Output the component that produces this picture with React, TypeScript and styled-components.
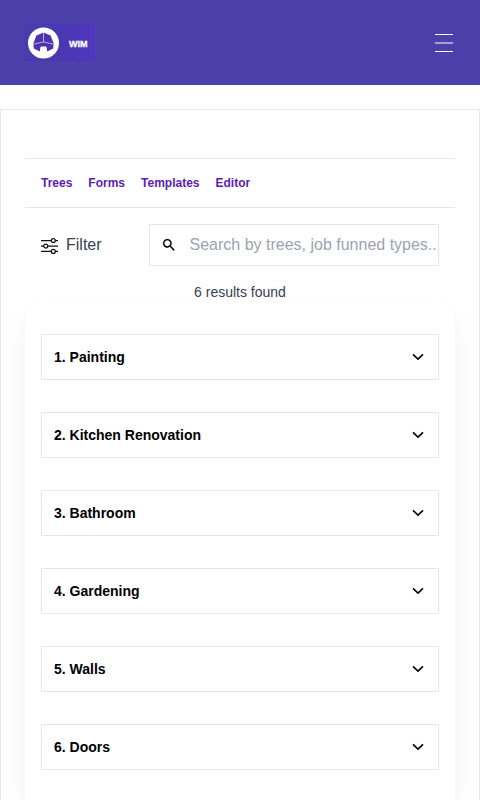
import React from "react";
import styled, { createGlobalStyle } from "styled-components";

const GlobalStyle = createGlobalStyle`
  *, *::before, *::after { box-sizing: border-box; }
  body {
    margin: 0;
    background: #fff;
    font-family: "Liberation Sans", Arial, sans-serif;
    line-height: 24px;
    color: #000;
  }
`;

const Page = styled.div`
  height: 100vh;
  overflow: hidden;
`;

const Header = styled.header`
  display: flex;
  align-items: center;
  justify-content: space-between;
  height: 85px;
  padding: 0 24px;
  background: #4e40ab;
`;

const Logo = styled.a`
  display: flex;
  align-items: center;
  gap: 9px;
  width: 71px;
  height: 37px;
  padding-left: 3px;
  background: linear-gradient(90deg, #4a3cac 0%, #4a37b3 55%, #4f37c0 100%);
  color: #fff;
  font-size: 9px;
  line-height: 12px;
  font-weight: 700;
`;

const LogoText = styled.span`
  padding-top: 2px;
  -webkit-text-stroke: 0.3px #fff;
`;

const MenuButton = styled.button`
  display: flex;
  width: 24px;
  padding: 0;
  border: 0;
  background: none;
`;

const Card = styled.main`
  margin-top: 24px;
  padding: 48px 24px;
  border: 1px solid #e5e7eb;
`;

const Nav = styled.nav`
  display: flex;
  align-items: center;
  gap: 16px;
  height: 50px;
  padding: 0 16px;
  border: solid #e5e7eb;
  border-width: 1px 0;
`;

const NavLink = styled.a`
  color: #5b21b6;
  font-size: 12px;
  line-height: 16px;
  font-weight: 700;
`;

const Toolbar = styled.div`
  display: flex;
  justify-content: space-between;
  align-items: center;
  padding: 16px 16px 0;
`;

const FilterButton = styled.button`
  display: flex;
  align-items: center;
  gap: 8px;
  padding: 0;
  border: 0;
  background: none;
  color: #374151;
  font: 16px/24px "Liberation Sans", Arial, sans-serif;

  svg { margin-top: 2px; }
`;

const SearchBox = styled.label`
  display: flex;
  align-items: center;
  width: 290px;
  height: 42px;
  padding-left: 11px;
  border: 1px solid #e5e7eb;
`;

const SearchInput = styled.input`
  flex: 1;
  min-width: 0;
  margin-left: 12.5px;
  padding: 0;
  border: 0;
  outline: 0;
  background: none;
  font: 16px/24px "Liberation Sans", Arial, sans-serif;

  &::placeholder { color: #9ca3af; opacity: 1; }
`;

const Results = styled.p`
  margin: 16px 0 0;
  text-align: center;
  color: #374151;
  font-size: 14px;
  line-height: 20px;
`;

const Panel = styled.section`
  display: grid;
  gap: 32px;
  padding: 32px 16px;
  box-shadow: 0 14px 25px -5px rgba(0, 0, 0, 0.09), 0 10px 10px -5px rgba(0, 0, 0, 0.04);
`;

const Item = styled.div`
  display: flex;
  align-items: center;
  justify-content: space-between;
  height: 46px;
  padding: 0 12px;
  border: 1px solid #e5e7eb;
  font-size: 14px;
  line-height: 20px;
  font-weight: 700;
`;

const LogoMark = () => (
  <svg width="33" height="33" viewBox="0 0 33 33" aria-hidden="true">
    <circle cx="16.5" cy="17" r="15.5" fill="#fff" />
    <path
      d="M16.5 6.6 9.4 9.6 6.3 17.4 6.8 22.4 12.8 25.4 13.4 21.2 14.2 20.6H18.8L19.6 21.2 20.2 25.4 26.2 22.4 26.7 17.4 23.6 9.6Z"
      fill="#4d33b0"
    />
    <path d="M16.5 6V16M6.4 18.2 16.5 16 26.6 18.2" fill="none" stroke="#fff" strokeWidth=".6" />
  </svg>
);

const MenuIcon = () => (
  <svg width="24" height="20" viewBox="0 0 24 20" aria-hidden="true">
    <g fill="#fff">
      <rect x="3" y="1" width="18" height="1" />
      <rect x="3" y="9" width="18" height="2" opacity=".5" />
      <rect x="3" y="18" width="18" height="1" />
    </g>
  </svg>
);

const FilterIcon = () => (
  <svg width="17" height="18" viewBox="0 0 17 18" fill="none" stroke="#111" strokeWidth="1.25" aria-hidden="true">
    <path d="M0 3.6H10.2M14.4 3.6H17M0 9H2.6M6.8 9H17M0 14.4H10.2M14.4 14.4H17" />
    <circle cx="12.3" cy="3.6" r="2" />
    <circle cx="4.7" cy="9" r="2" />
    <circle cx="12.3" cy="14.4" r="2" />
  </svg>
);

const SearchIcon = () => (
  <svg width="16" height="16" viewBox="0 0 24 24" stroke="#000" strokeWidth=".25" aria-hidden="true">
    <path d="M15.5 14h-.79l-.28-.27A6.47 6.47 0 0 0 16 9.5 6.5 6.5 0 1 0 9.5 16c1.61 0 3.09-.59 4.23-1.57l.27.28v.79l5 4.99L20.49 19l-4.99-5zm-6 0C7.01 14 5 11.99 5 9.5S7.01 5 9.5 5 14 7.01 14 9.5 11.99 14 9.5 14z" />
  </svg>
);

const Chevron = () => (
  <svg width="16" height="16" viewBox="0 0 16 16" fill="none" stroke="#000" strokeWidth="1.6" aria-hidden="true">
    <path d="M3 5.4 8 10.2 13 5.4" strokeLinejoin="round" />
  </svg>
);

const links = ["Trees", "Forms", "Templates", "Editor"];
const trees = ["Painting", "Kitchen Renovation", "Bathroom", "Gardening", "Walls", "Doors"];

export default function App() {
  return (
    <Page>
      <GlobalStyle />
      <Header>
        <Logo>
          <LogoMark />
          <LogoText>WIM</LogoText>
        </Logo>
        <MenuButton aria-label="Menu">
          <MenuIcon />
        </MenuButton>
      </Header>
      <Card>
        <Nav>
          {links.map((link) => (
            <NavLink key={link}>{link}</NavLink>
          ))}
        </Nav>
        <Toolbar>
          <FilterButton>
            <FilterIcon />
            Filter
          </FilterButton>
          <SearchBox>
            <SearchIcon />
            <SearchInput placeholder="Search by trees, job funned types..." />
          </SearchBox>
        </Toolbar>
        <Results>{trees.length} results found</Results>
        <Panel>
          {trees.map((tree, index) => (
            <Item key={tree}>
              {`${index + 1}. ${tree}`}
              <Chevron />
            </Item>
          ))}
        </Panel>
      </Card>
    </Page>
  );
}
